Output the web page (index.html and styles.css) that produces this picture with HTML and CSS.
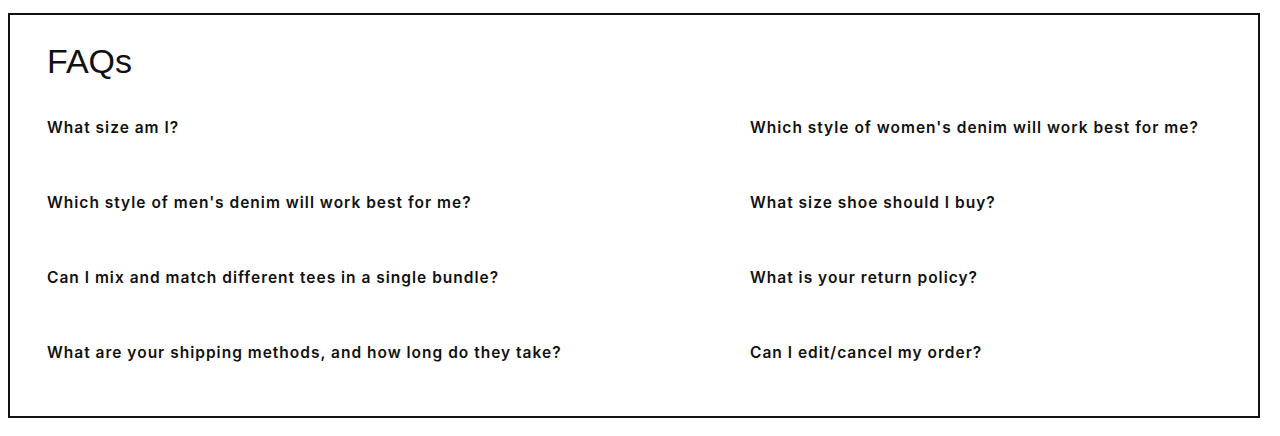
FILE: index.html
```html
<!DOCTYPE html>
<html lang="en">
<head>
    <meta charset="UTF-8">
    <meta name="viewport" content="width=device-width, initial-scale=1.0">
    <title>FAQs</title>
    <link rel="stylesheet" href="styles.css">
</head>
<body>
    <section class="faq">
        <h2 class="faq-title">FAQs</h2>
        <div class="faq-list">
            <a class="faq-item" href="#">What size am I?</a>
            <a class="faq-item" href="#">Which style of women's denim will work best for me?</a>
            <a class="faq-item" href="#">Which style of men's denim will work best for me?</a>
            <a class="faq-item" href="#">What size shoe should I buy?</a>
            <a class="faq-item" href="#">Can I mix and match different tees in a single bundle?</a>
            <a class="faq-item" href="#">What is your return policy?</a>
            <a class="faq-item" href="#">What are your shipping methods, and how long do they take?</a>
            <a class="faq-item" href="#">Can I edit/cancel my order?</a>
        </div>
    </section>
</body>
</html>
```

FILE: styles.css
```css
body {
    margin: 0;
    padding: 13px 20px 13px 8px;
    background-color: #fff;
    font-family: 'Liberation Sans', Arial, sans-serif;
    color: #111;
}
.faq {
    border: 2px solid #111;
    padding: 27px 37px 30px;
    height: 405px;
    box-sizing: border-box;
}
.faq-title {
    margin: 0 0 38px;
    font-size: 34px;
    font-weight: 400;
    line-height: 38px;
}
.faq-list {
    display: grid;
    grid-template-columns: 703px 1fr;
    row-gap: 56px;
}
.faq-item {
    font-family: Inter, 'Liberation Sans', sans-serif;
    font-size: 15.5px;
    font-weight: 600;
    line-height: 19px;
    letter-spacing: 1px;
    color: #111;
    text-decoration: none;
}
```
